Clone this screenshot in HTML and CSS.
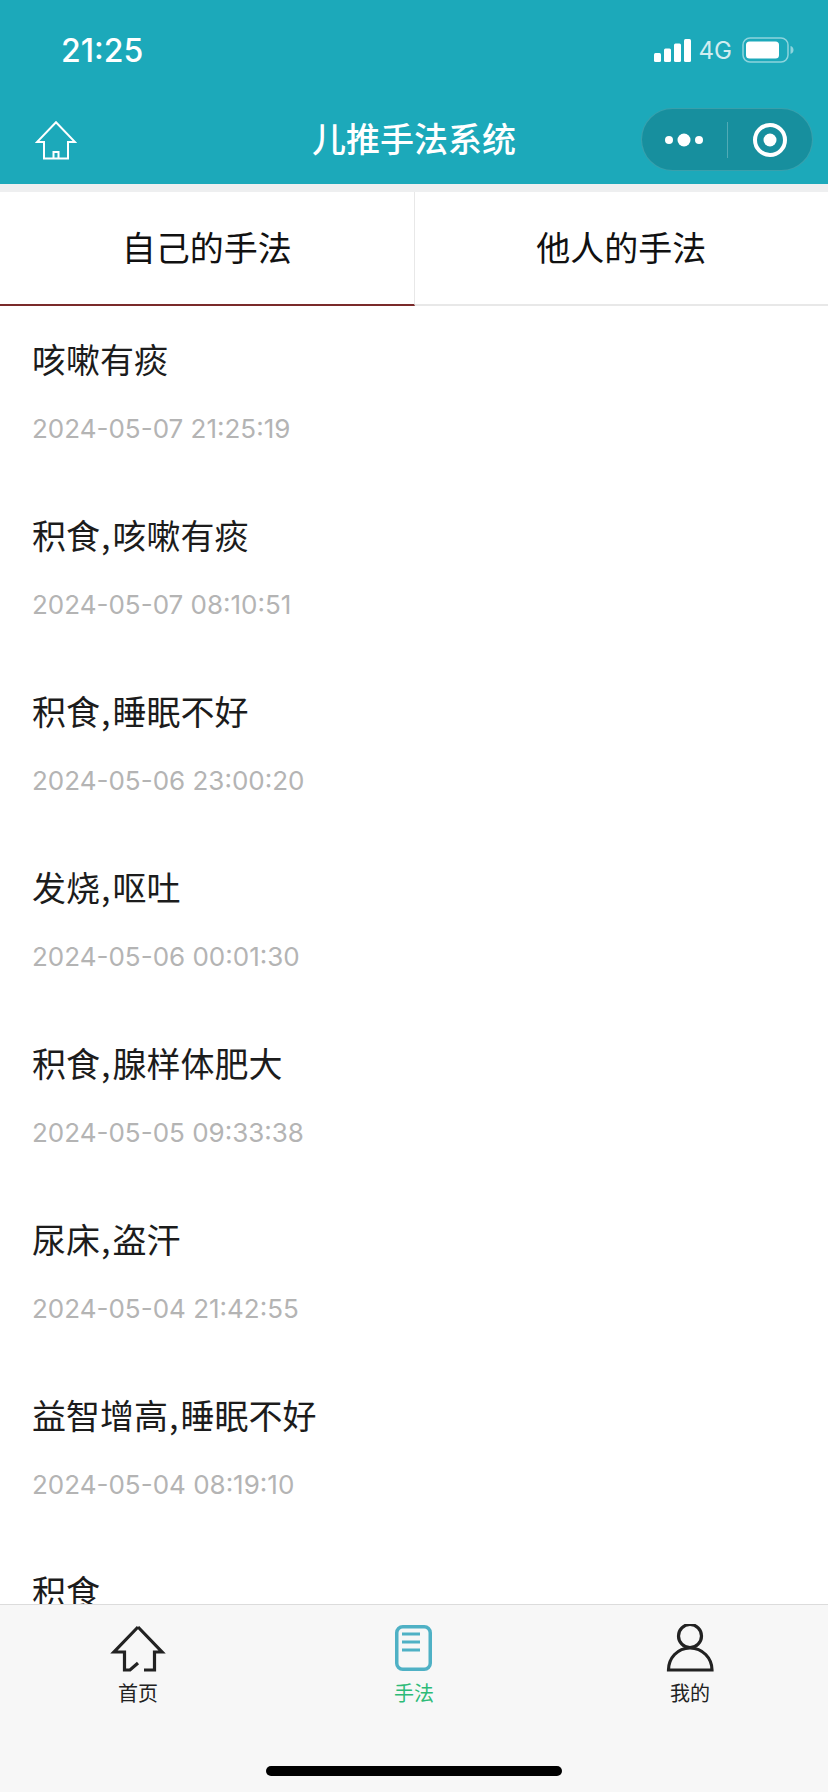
FILE: index.html
```html
<!DOCTYPE html>
<html lang="zh">
<head>
<meta charset="utf-8">
<title>儿推手法系统</title>
<link rel="stylesheet" href="styles.css">
</head>
<body>
<div class="app">
  <header class="header">
    <div class="status">
      <span class="clock">21:25</span>
      <div class="status-right">
        <svg class="signal" width="37" height="23" viewBox="0 0 37 23"><rect x="0" y="14" width="7" height="9" rx="1.5"/><rect x="10" y="9.500" width="7" height="13.500" rx="1.5"/><rect x="20" y="4.500" width="7" height="18.500" rx="1.5"/><rect x="30" y="0" width="7" height="23" rx="1.5"/></svg>
        <span class="net">4G</span>
        <svg class="battery" width="52" height="26" viewBox="0 0 52 26"><rect x="1" y="1" width="45" height="24" rx="7" fill="none" stroke="#fff" stroke-opacity=".5" stroke-width="1.500"/><rect x="4" y="4.500" width="33" height="17" rx="3.500" fill="#fff"/><path d="M48.500 9c2 .6 3 2.200 3 4s-1 3.400-3 4z" fill="#fff" fill-opacity=".5"/></svg>
      </div>
    </div>
    <div class="nav">
      <svg class="nav-home" width="42" height="40" viewBox="0 0 42 40" fill="none" stroke="#fff" stroke-width="2"><path d="M21 2.200 2 22h7v16.500h24V22h7zM18.500 38.500V32h5v6.500"/></svg>
      <h1 class="nav-title">儿推手法系统</h1>
      <div class="capsule">
        <div class="capsule-part">
          <svg width="38" height="14" viewBox="0 0 38 14" fill="#fff"><circle cx="4" cy="7" r="4"/><circle cx="19" cy="7" r="6.500"/><circle cx="34" cy="7" r="4"/></svg>
        </div>
        <span class="capsule-line"></span>
        <div class="capsule-part">
          <svg width="36" height="36" viewBox="0 0 36 36"><circle cx="18" cy="18" r="15" fill="none" stroke="#fff" stroke-width="4"/><circle cx="18" cy="18" r="6.500" fill="#fff"/></svg>
        </div>
      </div>
    </div>
  </header>

  <nav class="tabs">
    <div class="tab tab-active">自己的手法</div>
    <div class="tab">他人的手法</div>
  </nav>

  <main class="list">
    <div class="item"><div class="item-title">咳嗽有痰</div><div class="item-date">2024-05-07 21:25:19</div></div>
    <div class="item"><div class="item-title">积食<span class="comma">,</span>咳嗽有痰</div><div class="item-date">2024-05-07 08:10:51</div></div>
    <div class="item"><div class="item-title">积食<span class="comma">,</span>睡眠不好</div><div class="item-date">2024-05-06 23:00:20</div></div>
    <div class="item"><div class="item-title">发烧<span class="comma">,</span>呕吐</div><div class="item-date">2024-05-06 00:01:30</div></div>
    <div class="item"><div class="item-title">积食<span class="comma">,</span>腺样体肥大</div><div class="item-date">2024-05-05 09:33:38</div></div>
    <div class="item"><div class="item-title">尿床<span class="comma">,</span>盗汗</div><div class="item-date">2024-05-04 21:42:55</div></div>
    <div class="item"><div class="item-title">益智增高<span class="comma">,</span>睡眠不好</div><div class="item-date">2024-05-04 08:19:10</div></div>
    <div class="item"><div class="item-title">积食</div></div>
  </main>

  <footer class="tabbar">
    <div class="bar-items">
      <div class="bar-item">
        <svg class="bar-icon" width="60" height="52" viewBox="0 0 60 52" fill="none" stroke="#222" stroke-width="3.200"><path d="M30 3 6 28h10.500v18H22l8-7M36 46h10.500V28H54L30 3"/></svg>
        <span class="bar-label">首页</span>
      </div>
      <div class="bar-item bar-active">
        <svg class="bar-icon" width="60" height="52" viewBox="0 0 60 52" fill="none" stroke="#4fb1c5" stroke-width="3.500"><rect x="12.750" y="2.750" width="33.500" height="42.500" rx="6"/><path stroke-width="3" d="M18 10h18M18 18h18M18 26h18"/></svg>
        <span class="bar-label">手法</span>
      </div>
      <div class="bar-item">
        <svg class="bar-icon" width="60" height="52" viewBox="0 0 60 52" fill="none" stroke="#222" stroke-width="3.200"><circle cx="30" cy="12" r="11.500"/><path d="M8.500 46c0-12 9-22 21.500-22s22 10 22 22z"/></svg>
        <span class="bar-label">我的</span>
      </div>
    </div>
    <div class="home-bar"></div>
  </footer>
</div>
</body>
</html>
```
FILE: styles.css
```css
* { box-sizing: border-box; }
html, body { margin: 0; padding: 0; }
body {
  background: #fff;
  color: #1c1c1c;
  font-family: "Inter", "Noto Sans CJK SC", sans-serif;
}
.app {
  display: flex;
  flex-direction: column;
  width: 828px;
  height: 1792px;
  overflow: hidden;
}
.header {
  flex: none;
  height: 184px;
  background: #1ca9ba;
  color: #fff;
}
.status {
  display: flex;
  align-items: center;
  justify-content: space-between;
  height: 100px;
  padding: 0 34px 0 61px;
}
.clock {
  font-size: 32px;
  font-weight: 500;
}
.status-right {
  display: flex;
  align-items: center;
  gap: 8px;
}
.signal { fill: #fff; }
.net {
  margin-right: 2px;
  font-size: 24px;
  opacity: .8;
}
.nav {
  display: flex;
  align-items: center;
  justify-content: space-between;
  height: 63px;
  margin-top: 8px;
  padding: 0 15px 0 35px;
  position: relative;
}
.nav-title {
  position: absolute;
  left: 0;
  right: 0;
  top: 6px;
  margin: 0;
  font-family: "Noto Sans CJK SC", sans-serif;
  font-size: 34px;
  font-weight: 500;
  line-height: 48px;
  text-align: center;
}
.capsule {
  display: flex;
  align-items: center;
  width: 172px;
  height: 63px;
  border: 1px solid rgba(255, 255, 255, .14);
  border-radius: 32px;
  background: rgba(0, 0, 0, .15);
}
.capsule-part {
  flex: 1;
  display: flex;
  justify-content: center;
  align-items: center;
}
.capsule-line {
  width: 1px;
  height: 36px;
  background: rgba(255, 255, 255, .25);
}
.tabs {
  flex: none;
  display: flex;
  height: 122px;
  border-top: 8px solid #eeeff0;
}
.tab {
  flex: 1;
  display: flex;
  align-items: center;
  justify-content: center;
  padding-bottom: 4px;
  border-bottom: 2px solid #e8e8e8;
  font-family: "Noto Sans CJK SC", sans-serif;
  font-size: 34px;
  color: #111;
}
.tab-active {
  border-bottom-color: #7a2a2a;
  border-right: 1px solid #e8e8e8;
}
.list {
  flex: 1;
  min-height: 0;
  overflow: hidden;
}
.item {
  height: 176px;
  padding: 29px 32px 0;
}
.item-title {
  font-family: "Noto Sans CJK SC", sans-serif;
  font-size: 34px;
  line-height: 48px;
  color: #1c1c1c;
}
.comma {
  margin: 0 2px 0 1px;
}
.item-date {
  margin-top: 28px;
  font-size: 26px;
  line-height: 36px;
  color: #b4b4b4;
}
.tabbar {
  flex: none;
  height: 188px;
  border-top: 1px solid #dcdcdc;
  background: #f7f7f7;
}
.bar-items {
  display: flex;
  padding-top: 19px;
}
.bar-item {
  flex: 1;
  display: flex;
  flex-direction: column;
  align-items: center;
  font-family: "Noto Sans CJK SC", sans-serif;
  font-size: 20px;
  line-height: 28px;
  color: #222;
}
.bar-active { color: #2dbb77; }
.bar-label { margin-top: 3px; }
.home-bar {
  width: 296px;
  height: 10px;
  margin: 59px auto 0;
  border-radius: 5px;
  background: #000;
}
```
